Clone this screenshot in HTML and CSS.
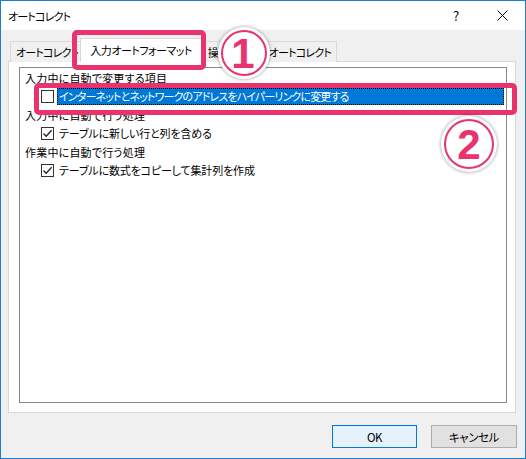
FILE: index.html
```html
<!DOCTYPE html>
<html lang="ja">
<head>
<meta charset="utf-8">
<title>オートコレクト</title>
<link rel="stylesheet" href="styles.css">
</head>
<body>
<div class="window">
  <div class="titlebar">
    <span class="title">オートコレクト</span>
    <span class="tbtn help">?</span>
    <span class="tbtn close">
      <svg width="11" height="11" viewBox="0 0 11 11"><path d="M0.5 0.5 L10.5 10.5 M10.5 0.5 L0.5 10.5" stroke="#000" stroke-width="1" fill="none"/></svg>
    </span>
  </div>
  <div class="content">
    <div class="tabs">
      <div class="tab first">オートコレクト</div>
      <div class="tab active">入力オートフォーマット</div>
      <div class="tab ops">操作</div>
      <div class="tab">数式オートコレクト</div>
    </div>
    <div class="panel">
      <div class="list">
        <div class="row head">入力中に自動で変更する項目</div>
        <div class="row item">
          <span class="cb"></span>
          <span class="label selected">インターネットとネットワークのアドレスをハイパーリンクに変更する</span>
        </div>
        <div class="row head">入力中に自動で行う処理</div>
        <div class="row item">
          <span class="cb checked"><svg width="11" height="11" viewBox="0 0 11 11"><path d="M1.5 5.5 L4.2 8.3 L9.6 2.2" stroke="#222" stroke-width="1.3" fill="none"/></svg></span>
          <span class="label">テーブルに新しい行と列を含める</span>
        </div>
        <div class="row head">作業中に自動で行う処理</div>
        <div class="row item">
          <span class="cb checked"><svg width="11" height="11" viewBox="0 0 11 11"><path d="M1.5 5.5 L4.2 8.3 L9.6 2.2" stroke="#222" stroke-width="1.3" fill="none"/></svg></span>
          <span class="label">テーブルに数式をコピーして集計列を作成</span>
        </div>
      </div>
    </div>
    <div class="buttons">
      <button class="btn default">OK</button>
      <button class="btn">キャンセル</button>
    </div>
  </div>

  <div class="mark box1"></div>
  <div class="mark box2"></div>
  <div class="badge badge1"><span class="ring"></span><span class="num">1</span></div>
  <div class="badge badge2"><span class="ring"></span><span class="num">2</span></div>
</div>
</body>
</html>
```

FILE: styles.css
```css
* { box-sizing: border-box; }

body {
  margin: 0;
  font-family: "Noto Sans CJK JP", "Noto Sans", sans-serif;
  font-size: 11px;
  letter-spacing: -0.15px;
  font-feature-settings: "palt";
  color: #000;
}

.window {
  position: relative;
  width: 526px;
  height: 459px;
  border: 1px solid #1a7fd3;
  background: #f0f0f0;
  display: flex;
  flex-direction: column;
  overflow: hidden;
}

.titlebar {
  flex: none;
  height: 29px;
  background: #fff;
  display: flex;
  align-items: center;
  padding-left: 7px;
}

.title { flex: 1; font-size: 11px; letter-spacing: -0.8px; }

.tbtn {
  width: 46px;
  height: 29px;
  display: flex;
  align-items: center;
  justify-content: center;
}

.help { font-size: 13px; }

.content {
  flex: 1;
  display: flex;
  flex-direction: column;
  padding: 8px 9px 0 7px;
}

.tabs {
  display: flex;
  align-items: flex-end;
  height: 24px;
  padding-left: 2px;
  margin-bottom: -1px;
  position: relative;
  z-index: 1;
  letter-spacing: -0.8px;
}

.tab {
  height: 21px;
  line-height: 20px;
  padding: 0 5px;
  border: 1px solid #d9d9d9;
  border-bottom: none;
  background: #f0f0f0;
  margin-right: -1px;
  white-space: nowrap;
}

.tab.first { padding: 0 4px 0 5px; }

.tab.active {
  height: 24px;
  line-height: 22px;
  background: #fff;
  padding: 0 9px;
  margin: 0 -1px 0 -2px;
  position: relative;
  z-index: 2;
  letter-spacing: -0.5px;
}

.tab.ops { padding: 0 14px 0 6px; }

.panel {
  height: 352px;
  background: #fff;
  border: 1px solid #d9d9d9;
  padding: 5px 8px 9px 10px;
  display: flex;
}

.list {
  flex: 1;
  border: 1px solid #828790;
  padding: 1px 0 0 5px;
  display: flex;
  flex-direction: column;
}

.row {
  display: flex;
  align-items: center;
  white-space: nowrap;
}

.row.head { height: 18px; letter-spacing: 0.2px; }

.row.item {
  height: 19px;
  padding-left: 16px;
}

.cb {
  width: 13px;
  height: 13px;
  border: 1px solid #333;
  background: #fff;
  flex: none;
  display: flex;
  align-items: center;
  justify-content: center;
  margin-right: 3px;
}

.label {
  padding: 0 2px;
  height: 17px;
  line-height: 16px;
}

.label.selected {
  flex: 1;
  margin-right: 2px;
  background: #0078d7;
  color: #fff;
  outline: 1px dotted #000;
  outline-offset: -1px;
  letter-spacing: -0.85px;
}

.buttons {
  display: flex;
  justify-content: flex-end;
  gap: 14px;
  margin-top: 12px;
  margin-right: -1px;
}

.btn {
  width: 86px;
  height: 23px;
  font: inherit;
  font-size: 11.5px;
  letter-spacing: -0.4px;
  border: 1px solid #adadad;
  background: #e1e1e1;
  color: #000;
  padding: 0;
}

.btn.default {
  width: 85px;
  border-color: #0078d7;
  background: #e5f1fb;
}

.mark {
  position: absolute;
  border: 5px solid #e8336c;
  border-radius: 5px;
  z-index: 5;
}

.box1 { left: 71px; top: 29px; width: 134px; height: 40px; }
.box2 { left: 33px; top: 82px; width: 483px; height: 32px; }

.badge {
  position: absolute;
  border-radius: 50%;
  background: #fff;
  box-shadow: 0 0 3px 1px rgba(0,0,0,0.25);
  display: flex;
  align-items: center;
  justify-content: center;
  z-index: 6;
}

.ring {
  position: absolute;
  inset: 3px;
  border: 2px solid #e8336c;
  border-radius: 50%;
}

.num {
  font-family: "Liberation Sans", sans-serif;
  font-weight: bold;
  color: #e8336c;
  line-height: 1;
  letter-spacing: 0;
  position: relative;
  top: 1px;
}

.badge1 { left: 217px; top: 26px; width: 52px; height: 52px; }
.badge1 .num { font-size: 42px; left: -1px; }
.badge2 { left: 440px; top: 115px; width: 56px; height: 56px; }
.badge2 .num { font-size: 42px; }
```
